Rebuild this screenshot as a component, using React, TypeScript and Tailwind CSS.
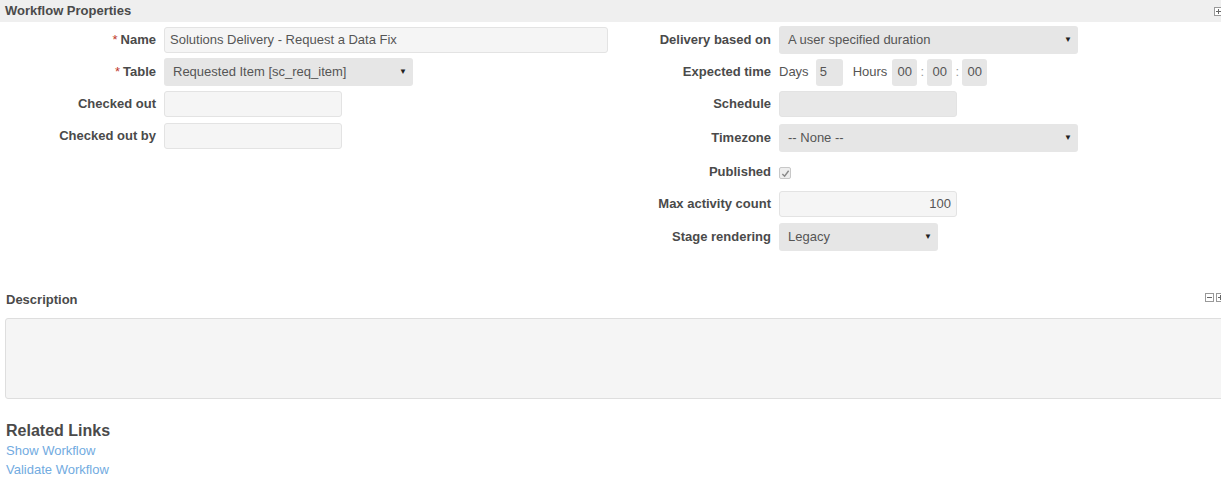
import React from 'react';

const font = { fontFamily: '"Liberation Sans", Arial, sans-serif' };

function Label({ children, req }: { children: React.ReactNode; req?: boolean }) {
  return (
    <div className="text-right text-[13px] font-bold text-[#4a4a4a] pr-2">
      {req && <span className="text-[#c0392b] font-normal mr-[3px]">*</span>}
      {children}
    </div>
  );
}

function Input({ w, value, right, dark }: { w: string; value?: string; right?: boolean; dark?: boolean }) {
  return (
    <div
      className={`${w} h-[26px] rounded-[3px] border border-[#e3e3e3] ${dark ? 'bg-[#e8e8e8]' : 'bg-[#f5f5f5]'} px-[5px] flex items-center text-[13px] text-[#555] ${right ? 'justify-end' : ''}`}
    >
      {value}
    </div>
  );
}

function Select({ w, value }: { w: string; value: string }) {
  return (
    <div className={`${w} h-[28px] rounded-[3px] bg-[#e6e6e6] pl-[9px] pr-[6px] flex items-center justify-between text-[13px] text-[#555]`}>
      <span>{value}</span>
      <span className="text-[8px] text-[#222]">▼</span>
    </div>
  );
}

function Row({ h = 'h-[32px]', children }: { h?: string; children: React.ReactNode }) {
  return <div className={`flex items-center ${h}`}>{children}</div>;
}

function Box({ plus }: { plus?: boolean }) {
  return (
    <span className="relative w-[9px] h-[9px] border border-[#999] bg-white flex items-center justify-center">
      <span className="w-[5px] h-[1px] bg-[#666]"></span>
      {plus && <span className="absolute w-[1px] h-[5px] bg-[#666]"></span>}
    </span>
  );
}

export default function App() {
  return (
    <div className="w-[1221px] h-[491px] bg-white overflow-hidden" style={font}>
      <div className="h-[22px] bg-[#efefef] flex items-center justify-between pl-[5px] pr-[1px]">
        <span className="text-[13px] font-bold text-[#4a4a4a]">Workflow Properties</span>
        <span className="-mr-[3px]"><Box plus /></span>
      </div>

      <div className="flex pt-[2px]">
        {/* left column */}
        <div className="w-[611px] flex flex-col">
          <Row>
            <div className="w-[164px]"><Label req>Name</Label></div>
            <Input w="w-[444px]" value="Solutions Delivery - Request a Data Fix" />
          </Row>
          <Row>
            <div className="w-[164px]"><Label req>Table</Label></div>
            <Select w="w-[249px]" value="Requested Item [sc_req_item]" />
          </Row>
          <Row>
            <div className="w-[164px]"><Label>Checked out</Label></div>
            <Input w="w-[178px]" />
          </Row>
          <Row>
            <div className="w-[164px]"><Label>Checked out by</Label></div>
            <Input w="w-[178px]" />
          </Row>
        </div>

        {/* right column */}
        <div className="flex flex-col">
          <Row>
            <div className="w-[168px]"><Label>Delivery based on</Label></div>
            <Select w="w-[299px]" value="A user specified duration" />
          </Row>
          <Row>
            <div className="w-[168px]"><Label>Expected time</Label></div>
            <div className="flex items-center text-[13px] text-[#555]">
              <span className="mr-[7px]">Days</span>
              <div className="w-[27px] h-[27px] bg-[#e6e6e6] rounded-[3px] flex items-center pl-[4px]">5</div>
              <span className="ml-[10px] mr-[5px]">Hours</span>
              <div className="w-[25px] h-[27px] bg-[#e6e6e6] rounded-[3px] flex items-center justify-center">00</div>
              <span className="w-[10px] text-center text-[#999]">:</span>
              <div className="w-[25px] h-[27px] bg-[#e6e6e6] rounded-[3px] flex items-center justify-center">00</div>
              <span className="w-[10px] text-center text-[#999]">:</span>
              <div className="w-[25px] h-[27px] bg-[#e6e6e6] rounded-[3px] flex items-center justify-center">00</div>
            </div>
          </Row>
          <Row>
            <div className="w-[168px]"><Label>Schedule</Label></div>
            <Input w="w-[178px]" dark />
          </Row>
          <Row h="h-[36px]">
            <div className="w-[168px]"><Label>Timezone</Label></div>
            <Select w="w-[299px]" value="-- None --" />
          </Row>
          <Row h="h-[32px]">
            <div className="w-[168px]"><Label>Published</Label></div>
            <div className="w-[12px] h-[12px] mt-[2px] border border-[#c8c8c8] bg-[#eee] rounded-[2px] flex items-center justify-center">
              <svg width="9" height="9" viewBox="0 0 10 10">
                <path d="M1.5 5.5 L4 8 L8.5 2" stroke="#8a8a8a" strokeWidth="1.6" fill="none" />
              </svg>
            </div>
          </Row>
          <Row h="h-[32px]">
            <div className="w-[168px]"><Label>Max activity count</Label></div>
            <Input w="w-[178px]" value="100" right />
          </Row>
          <Row h="h-[34px]">
            <div className="w-[168px]"><Label>Stage rendering</Label></div>
            <Select w="w-[159px]" value="Legacy" />
          </Row>
        </div>
      </div>

      <div className="mt-[36px] flex items-center justify-between pl-[6px] h-[20px]">
        <span className="text-[13px] font-bold text-[#4a4a4a]">Description</span>
        <div className="flex gap-[2px] -mt-[6px] -mr-[4px]">
          <Box />
          <Box plus />
        </div>
      </div>
      <div className="ml-[5px] -mr-[4px] mt-[8px] h-[81px] border border-[#dedede] rounded-[3px] bg-[#f5f5f5]"></div>

      <div className="pl-[6px] mt-[22px]">
        <div className="text-[16px] font-bold text-[#4a4a4a] leading-[20px]">Related Links</div>
        <div className="text-[13px] text-[#72abdf] leading-[19px]">Show Workflow</div>
        <div className="text-[13px] text-[#72abdf] leading-[19px]">Validate Workflow</div>
      </div>
    </div>
  );
}
